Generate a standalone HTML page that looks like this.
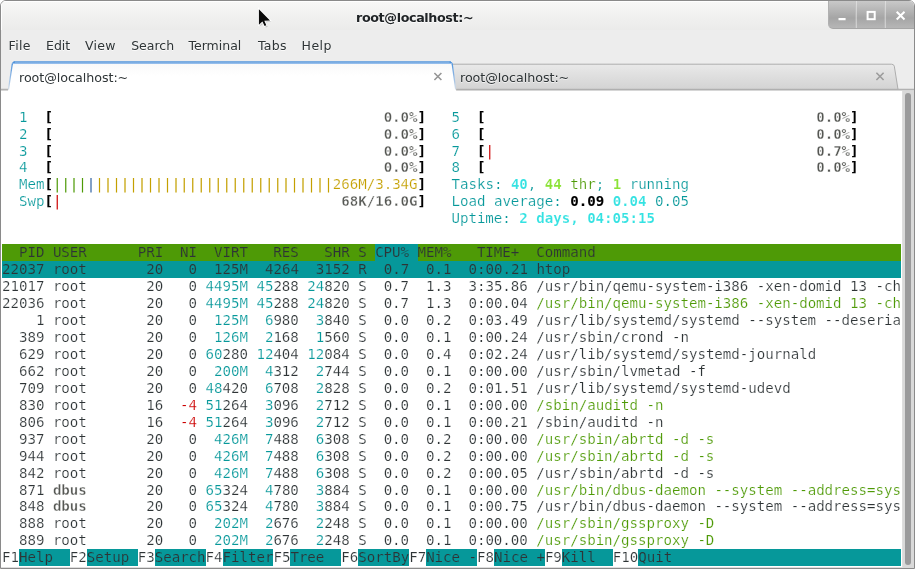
<!DOCTYPE html>
<html><head><meta charset="utf-8"><title>root@localhost:~</title>
<style>
html,body{margin:0;padding:0;width:915px;height:569px;overflow:hidden;background:#fff}
body{position:relative;font-family:"DejaVu Sans","Liberation Sans",sans-serif;color:#2e3436}
#win{position:absolute;left:0;top:0;width:913px;height:567px;border:1px solid #8a8a8a;border-radius:6px 6px 0 0;background:#ededed;overflow:hidden}
#tbar{position:absolute;left:0;top:0;width:913px;height:28.5px;background:linear-gradient(#f8f8f7,#f1f1f0 50%,#ebebea);box-shadow:inset 1px 1px 0 #fff}
#title{position:absolute;left:355px;top:8px;font-weight:bold;font-size:12.7px;letter-spacing:-0.36px;line-height:17px;color:#202426;white-space:pre;text-shadow:0 1px 0 rgba(255,255,255,.75)}
#btns{position:absolute;left:827px;top:-1px;width:87px;height:28px;border-radius:0 0 0 5px;background:linear-gradient(#cbcbcb,#a5a5a5 64%,#b6b6b6);border-bottom:1px solid #a6a6a6;border-left:1px solid #b0b0b0}
#btns i{position:absolute;top:0;width:1px;height:28px;background:rgba(255,255,255,.4);border-left:1px solid rgba(0,0,0,.1)}
.menu{position:absolute;top:36px;text-shadow:0 1px 0 rgba(255,255,255,.75);font-size:12.5px;line-height:17px;white-space:pre}
#tab2{position:absolute;left:0;top:0}
.tabt{position:absolute;top:68px;text-shadow:0 1px 0 rgba(255,255,255,.6);font-size:12.7px;line-height:17px;white-space:pre;letter-spacing:-0.05px}
#term{position:absolute;left:0;top:89.8px;width:901px;height:477.2px;background:#fff;box-shadow:inset 0 -1px 0 #dedede}
#sb{position:absolute;left:901px;top:89.8px;width:12px;height:477.2px;background:#d9d9d9;border-left:1px solid #dedede}
#sb div{position:absolute;left:2px;top:2.4px;width:6.2px;height:471.4px;border-radius:3.1px;background:#9a9a9b}
.bg{position:absolute;height:16.96px}
.r{position:absolute;left:2px;height:16.96px;line-height:16.96px;font-family:"DejaVu Sans Mono","Liberation Mono",monospace;font-size:14.13px;letter-spacing:-0.024px;white-space:pre;color:#2e3436;-webkit-text-stroke:0.2px #fff}
.r b{font-weight:bold;-webkit-text-stroke-width:0.32px}
</style></head><body>
<div id="root" style="position:absolute;left:0;top:0;width:915px;height:569px;will-change:transform">
<div id="win">
 <div id="tbar"></div>
 <div id="title">root@localhost:~</div>
 <div id="btns"><i style="left:25.5px"></i><i style="left:55.3px"></i>
  <svg width="87" height="29" style="position:absolute;left:0;top:0" fill="none" stroke="#fff">
   <path d="M9.5 19.1H16.6" stroke-width="2.2"/>
   <rect x="38.6" y="11.9" width="7.1" height="7.3" stroke-width="2"/>
   <path d="M67.7 11.8L75.5 19.5M75.5 11.8L67.7 19.5" stroke-width="2"/>
  </svg>
 </div>
 <div class="menu" style="left:7.6px;letter-spacing:.3px">File</div>
 <div class="menu" style="left:45px">Edit</div>
 <div class="menu" style="left:84px;letter-spacing:.25px">View</div>
 <div class="menu" style="left:130.2px">Search</div>
 <div class="menu" style="left:187.5px">Terminal</div>
 <div class="menu" style="left:257px;letter-spacing:.25px">Tabs</div>
 <div class="menu" style="left:300.5px;letter-spacing:.5px">Help</div>
 <svg id="tabs" width="913" height="31" style="position:absolute;left:0;top:59px">
  <defs>
   <linearGradient id="g2" x1="0" y1="0" x2="0" y2="1"><stop offset="0" stop-color="#e9e9e9"/><stop offset="1" stop-color="#d3d3d3"/></linearGradient>
   <linearGradient id="g1" x1="0" y1="0" x2="0" y2="1"><stop offset="0" stop-color="#f8f8f8"/><stop offset="0.5" stop-color="#ffffff"/></linearGradient>
   <linearGradient id="g3" x1="0" y1="0" x2="0" y2="1"><stop offset="0" stop-color="#4a90d9"/><stop offset="0.5" stop-color="#8db6e4"/><stop offset="1" stop-color="#d5dde6"/></linearGradient>
  </defs>
  <path d="M0 29.4H913" stroke="#b0b0b0" stroke-width="1.2"/><path d="M0 30.4H913" stroke="#cfcfcf" stroke-width="0.9"/>
  <path d="M454 29.3L450 4.2H890.5Q892.8 4.2 893.3 6.2L897 29.3Z" fill="url(#g2)" stroke="#adadad" stroke-width="1"/>
  <path d="M7 31L11 4Q11.5 1.5 14 1.5H448.5Q451 1.5 451.5 4L455.2 31Z" fill="url(#g1)"/>
  <path d="M7.5 29.5L11.2 4.5Q11.7 2.2 14 2.2" fill="none" stroke="url(#g3)" stroke-width="1.3"/>
  <path d="M454.7 29.5L451.3 4.5Q450.8 2.2 448.5 2.2" fill="none" stroke="url(#g3)" stroke-width="1.3"/>
  <path d="M12.5 2.0H450" stroke="#5294db" stroke-width="1.7"/>
  <path d="M11.5 3.5H451" stroke="#94bdeb" stroke-width="1.1"/>
  <path d="M433.4 13L440.4 20M440.4 13L433.4 20" stroke="#959595" stroke-width="1.6" fill="none"/>
  <path d="M875.4 12.8L882.6 20M882.6 12.8L875.4 20" stroke="#9c9c9c" stroke-width="1.6" fill="none"/>
 </svg>
 <div class="tabt" style="left:18px">root@localhost:~</div>
 <div class="tabt" style="left:459px">root@localhost:~</div>
 <div id="term"></div>
 <div id="sb"><div></div></div>
</div>
<div id="termtext" style="position:absolute;left:0;top:0">
<div class="bg" style="left:2.00px;top:243.99px;width:899.20px;background:#4e9a06"></div>
<div class="bg" style="left:375.25px;top:243.99px;width:42.42px;background:#06989a"></div>
<div class="bg" style="left:2.00px;top:260.95px;width:899.20px;background:#06989a"></div>
<div class="bg" style="left:18.97px;top:549.27px;width:50.90px;background:#06989a"></div>
<div class="bg" style="left:86.83px;top:549.27px;width:50.90px;background:#06989a"></div>
<div class="bg" style="left:154.69px;top:549.27px;width:50.90px;background:#06989a"></div>
<div class="bg" style="left:222.56px;top:549.27px;width:50.90px;background:#06989a"></div>
<div class="bg" style="left:290.42px;top:549.27px;width:50.90px;background:#06989a"></div>
<div class="bg" style="left:358.29px;top:549.27px;width:50.90px;background:#06989a"></div>
<div class="bg" style="left:426.15px;top:549.27px;width:50.90px;background:#06989a"></div>
<div class="bg" style="left:494.01px;top:549.27px;width:50.90px;background:#06989a"></div>
<div class="bg" style="left:561.88px;top:549.27px;width:50.90px;background:#06989a"></div>
<div class="bg" style="left:638.23px;top:549.27px;width:262.97px;background:#06989a"></div>
<div class="r" style="top:109px">  <span style="color:#06989a">1  </span><b style="color:#000;-webkit-text-stroke:0.12px #000">[</b>                                       <b style="color:#555753">0.0%</b><b style="color:#000;-webkit-text-stroke:0.12px #000">]</b>   <span style="color:#06989a">5  </span><b style="color:#000;-webkit-text-stroke:0.12px #000">[</b>                                       <b style="color:#555753">0.0%</b><b style="color:#000;-webkit-text-stroke:0.12px #000">]</b></div>
<div class="r" style="top:126px">  <span style="color:#06989a">2  </span><b style="color:#000;-webkit-text-stroke:0.12px #000">[</b>                                       <b style="color:#555753">0.0%</b><b style="color:#000;-webkit-text-stroke:0.12px #000">]</b>   <span style="color:#06989a">6  </span><b style="color:#000;-webkit-text-stroke:0.12px #000">[</b>                                       <b style="color:#555753">0.0%</b><b style="color:#000;-webkit-text-stroke:0.12px #000">]</b></div>
<div class="r" style="top:143px">  <span style="color:#06989a">3  </span><b style="color:#000;-webkit-text-stroke:0.12px #000">[</b>                                       <b style="color:#555753">0.0%</b><b style="color:#000;-webkit-text-stroke:0.12px #000">]</b>   <span style="color:#06989a">7  </span><b style="color:#000;-webkit-text-stroke:0.12px #000">[</b><span style="color:#cc0000;-webkit-text-stroke-color:transparent">|</span>                                      <b style="color:#555753">0.7%</b><b style="color:#000;-webkit-text-stroke:0.12px #000">]</b></div>
<div class="r" style="top:159px">  <span style="color:#06989a">4  </span><b style="color:#000;-webkit-text-stroke:0.12px #000">[</b>                                       <b style="color:#555753">0.0%</b><b style="color:#000;-webkit-text-stroke:0.12px #000">]</b>   <span style="color:#06989a">8  </span><b style="color:#000;-webkit-text-stroke:0.12px #000">[</b>                                       <b style="color:#555753">0.0%</b><b style="color:#000;-webkit-text-stroke:0.12px #000">]</b></div>
<div class="r" style="top:176px">  <span style="color:#06989a">Mem</span><b style="color:#000;-webkit-text-stroke:0.12px #000">[</b><span style="color:#4e9a06;-webkit-text-stroke-color:transparent">||||</span><span style="color:#3465a4;-webkit-text-stroke-color:transparent">|</span><span style="color:#c4a000;-webkit-text-stroke-color:transparent">||||||||||||||||||||||||||||</span><span style="color:#c4a000">266M/3.34G</span><b style="color:#000;-webkit-text-stroke:0.12px #000">]</b>   <span style="color:#06989a">Tasks: </span><b style="color:#34e2e2;-webkit-text-stroke-width:0.15px">40</b><span style="color:#06989a">, </span><b style="color:#8ae234;-webkit-text-stroke-width:0.15px">44</b><span style="color:#4e9a06"> thr</span><span style="color:#06989a">; </span><b style="color:#8ae234;-webkit-text-stroke-width:0.15px">1</b><span style="color:#06989a"> running</span></div>
<div class="r" style="top:193px">  <span style="color:#06989a">Swp</span><b style="color:#000;-webkit-text-stroke:0.12px #000">[</b><span style="color:#cc0000;-webkit-text-stroke-color:transparent">|</span>                                 <b style="color:#555753">68K/16.0G</b><b style="color:#000;-webkit-text-stroke:0.12px #000">]</b>   <span style="color:#06989a">Load average: </span><b style="color:#000;-webkit-text-stroke:0.12px #000">0.09</b><span style="color:#06989a"> </span><b style="color:#34e2e2;-webkit-text-stroke-width:0.15px">0.04</b><span style="color:#06989a"> </span><span style="color:#06989a">0.05</span></div>
<div class="r" style="top:210px">                                                     <span style="color:#06989a">Uptime: </span><b style="color:#34e2e2;-webkit-text-stroke-width:0.15px">2 days, 04:05:15</b></div>
<div class="r" style="top:244px"><span style="-webkit-text-stroke-color:#4e9a06">  PID USER      PRI  NI  VIRT   RES   SHR S </span><span style="-webkit-text-stroke-color:#06989a">CPU% </span><span style="-webkit-text-stroke-color:#4e9a06">MEM%   TIME+  Command</span></div>
<div class="r" style="top:261px"><span style="-webkit-text-stroke-color:#06989a">22037</span> <span style="-webkit-text-stroke-color:#06989a">root</span>      <span style="-webkit-text-stroke-color:#06989a"> 20</span> <span style="-webkit-text-stroke-color:#06989a">  0</span>  <span style="-webkit-text-stroke-color:#06989a">125M</span>  <span style="-webkit-text-stroke-color:#06989a">4264</span>  <span style="-webkit-text-stroke-color:#06989a">3152</span> <span style="-webkit-text-stroke-color:#06989a">R</span> <span style="-webkit-text-stroke-color:#06989a"> 0.7</span> <span style="-webkit-text-stroke-color:#06989a"> 0.1</span>  <span style="-webkit-text-stroke-color:#06989a">0:00.21</span> <span style="-webkit-text-stroke-color:#06989a">htop</span></div>
<div class="r" style="top:278px">21017 root       20   0 <span style="color:#06989a">4495M</span> <span style="color:#06989a">45</span>288 <span style="color:#06989a">24</span>820 S  0.7  1.3  3:35.86 /usr/bin/qemu-system-i386 -xen-domid 13 -ch</div>
<div class="r" style="top:295px">22036 root       20   0 <span style="color:#06989a">4495M</span> <span style="color:#06989a">45</span>288 <span style="color:#06989a">24</span>820 S  0.7  1.3  0:00.04 <span style="color:#4e9a06">/usr/bin/qemu-system-i386 -xen-domid 13 -ch</span></div>
<div class="r" style="top:312px">    1 root       20   0  <span style="color:#06989a">125M</span>  <span style="color:#06989a">6</span>980  <span style="color:#06989a">3</span>840 S  0.0  0.2  0:03.49 /usr/lib/systemd/systemd --system --deseria</div>
<div class="r" style="top:329px">  389 root       20   0  <span style="color:#06989a">126M</span>  <span style="color:#06989a">2</span>168  <span style="color:#06989a">1</span>560 S  0.0  0.1  0:00.24 /usr/sbin/crond -n</div>
<div class="r" style="top:346px">  629 root       20   0 <span style="color:#06989a">60</span>280 <span style="color:#06989a">12</span>404 <span style="color:#06989a">12</span>084 S  0.0  0.4  0:02.24 /usr/lib/systemd/systemd-journald</div>
<div class="r" style="top:363px">  662 root       20   0  <span style="color:#06989a">200M</span>  <span style="color:#06989a">4</span>312  <span style="color:#06989a">2</span>744 S  0.0  0.1  0:00.00 /usr/sbin/lvmetad -f</div>
<div class="r" style="top:380px">  709 root       20   0 <span style="color:#06989a">48</span>420  <span style="color:#06989a">6</span>708  <span style="color:#06989a">2</span>828 S  0.0  0.2  0:01.51 /usr/lib/systemd/systemd-udevd</div>
<div class="r" style="top:397px">  830 root       16 <span style="color:#cc0000"> -4</span> <span style="color:#06989a">51</span>264  <span style="color:#06989a">3</span>096  <span style="color:#06989a">2</span>712 S  0.0  0.1  0:00.00 <span style="color:#4e9a06">/sbin/auditd -n</span></div>
<div class="r" style="top:414px">  806 root       16 <span style="color:#cc0000"> -4</span> <span style="color:#06989a">51</span>264  <span style="color:#06989a">3</span>096  <span style="color:#06989a">2</span>712 S  0.0  0.1  0:00.21 /sbin/auditd -n</div>
<div class="r" style="top:431px">  937 root       20   0  <span style="color:#06989a">426M</span>  <span style="color:#06989a">7</span>488  <span style="color:#06989a">6</span>308 S  0.0  0.2  0:00.00 <span style="color:#4e9a06">/usr/sbin/abrtd -d -s</span></div>
<div class="r" style="top:448px">  944 root       20   0  <span style="color:#06989a">426M</span>  <span style="color:#06989a">7</span>488  <span style="color:#06989a">6</span>308 S  0.0  0.2  0:00.00 <span style="color:#4e9a06">/usr/sbin/abrtd -d -s</span></div>
<div class="r" style="top:465px">  842 root       20   0  <span style="color:#06989a">426M</span>  <span style="color:#06989a">7</span>488  <span style="color:#06989a">6</span>308 S  0.0  0.2  0:00.05 /usr/sbin/abrtd -d -s</div>
<div class="r" style="top:482px">  871 <b style="color:#555753">dbus</b>       20   0 <span style="color:#06989a">65</span>324  <span style="color:#06989a">4</span>780  <span style="color:#06989a">3</span>884 S  0.0  0.1  0:00.00 <span style="color:#4e9a06">/usr/bin/dbus-daemon --system --address=sys</span></div>
<div class="r" style="top:498px">  848 <b style="color:#555753">dbus</b>       20   0 <span style="color:#06989a">65</span>324  <span style="color:#06989a">4</span>780  <span style="color:#06989a">3</span>884 S  0.0  0.1  0:00.75 /usr/bin/dbus-daemon --system --address=sys</div>
<div class="r" style="top:515px">  888 root       20   0  <span style="color:#06989a">202M</span>  <span style="color:#06989a">2</span>676  <span style="color:#06989a">2</span>248 S  0.0  0.1  0:00.00 <span style="color:#4e9a06">/usr/sbin/gssproxy -D</span></div>
<div class="r" style="top:532px">  889 root       20   0  <span style="color:#06989a">202M</span>  <span style="color:#06989a">2</span>676  <span style="color:#06989a">2</span>248 S  0.0  0.1  0:00.00 <span style="color:#4e9a06">/usr/sbin/gssproxy -D</span></div>
<div class="r" style="top:549px">F1<span style="-webkit-text-stroke-color:#06989a">Help  </span>F2<span style="-webkit-text-stroke-color:#06989a">Setup </span>F3<span style="-webkit-text-stroke-color:#06989a">Search</span>F4<span style="-webkit-text-stroke-color:#06989a">Filter</span>F5<span style="-webkit-text-stroke-color:#06989a">Tree  </span>F6<span style="-webkit-text-stroke-color:#06989a">SortBy</span>F7<span style="-webkit-text-stroke-color:#06989a">Nice -</span>F8<span style="-webkit-text-stroke-color:#06989a">Nice +</span>F9<span style="-webkit-text-stroke-color:#06989a">Kill  </span>F10<span style="-webkit-text-stroke-color:#06989a">Quit</span></div>
</div>
<svg width="20" height="25" style="position:absolute;left:254px;top:5px" viewBox="254 5 20 25"><path d="M259.8 11.4L260.4 26.2L263.6 23.3L265.8 27.6L267.8 26.8L265.6 22.4L271.2 21.6Z" fill="rgba(0,0,0,.16)"/><path d="M258.9 9.2V24.8L262.4 21.6L264.6 26L266.3 25.2L264.3 20.8L270 20.4Z" fill="#0a0a0a" stroke="#fff" stroke-width="1.6" stroke-linejoin="miter" paint-order="stroke"/></svg>
</div>
</body></html>
